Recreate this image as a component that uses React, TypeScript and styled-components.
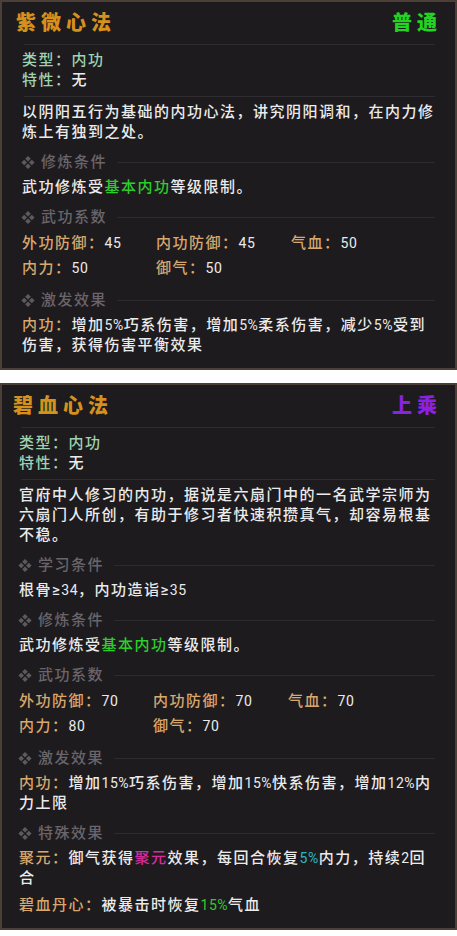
import React from 'react';
import styled, { createGlobalStyle } from 'styled-components';

const GlobalStyle = createGlobalStyle`
	html, body { margin: 0; padding: 0; background: #ffffff; }
`;

const Page = styled.div`
	display: flex;
	flex-direction: column;
	gap: 13px;
	width: 457px;
`;

const Panel = styled.section<{ $inset: number }>`
	box-sizing: border-box;
	width: 100%;
	background: #1e1b1f;
	border: 2px solid #4c3f37;
	padding: 0 18px 13px ${p => p.$inset}px;
	font-family: Roboto, "Noto Sans CJK SC", sans-serif;
	font-size: 15px;
	font-weight: 500;
	line-height: 20px;
	letter-spacing: 1.5px;
	color: #ebebeb;
`;

const Header = styled.div`
	display: flex;
	justify-content: space-between;
	align-items: center;
	padding-top: 9px;
	margin: 0 -5px 11px -6px;
	line-height: 22px;
`;

const Title = styled.span`
	font-family: "Noto Sans CJK SC", serif;
	font-weight: 900;
	font-size: 20px;
	letter-spacing: 5px;
	color: #d6901c;
`;

const Grade = styled.span<{ $color: string }>`
	font-family: "Noto Sans CJK SC", serif;
	font-weight: 900;
	font-size: 20px;
	letter-spacing: 5px;
	color: ${p => p.$color};
`;

const Divider = styled.div`
	height: 1px;
	margin: 0 2px;
	background: rgba(255, 255, 255, 0.08);
`;

const Info = styled.div`
	margin: 5px 0 6px;
`;

const InfoRow = styled.div`
	color: #9fd2b0;
`;

const Plain = styled.span`
	color: #ebebeb;
`;

const Desc = styled.p`
	margin: 5px 0 0;
`;

const Section = styled.div`
	margin-top: 10px;
`;

const Head = styled.div`
	display: flex;
	align-items: center;
	height: 20px;
	color: #69656a;
	gap: 6px;

	svg { flex: none; margin-left: -1px; }

	&::after {
		content: "";
		flex: 1;
		height: 1px;
		margin: 0 2px 0 4px;
		background: rgba(120, 150, 140, 0.14);
	}
`;

const Body = styled.div`
	margin-top: 5px;
`;

const Para = styled.p`
	margin: 0;
	& + & { margin-top: 7px; }
`;

const Label = styled.span`
	color: #d9a86c;
`;

const Hi = styled.span<{ $color: string }>`
	color: ${p => p.$color};
`;

const Num = styled.span`
	font-family: Roboto, "Liberation Sans", sans-serif;
	font-size: 14px;
	font-weight: 400;
	letter-spacing: 0.5px;
`;

const StatGrid = styled.div`
	display: grid;
	grid-template-columns: 134px 135px 1fr;
	grid-auto-rows: 25px;
	align-items: center;
	margin: 3px 0 1px;
`;

const Diamonds = () => (
	<svg width="14" height="13" viewBox="0 0 14 13">
		<g fill="#5e5a5c">
			<path d="M7 0 L9.8 2.8 L7 5.6 L4.2 2.8 Z" />
			<path d="M3.2 3.7 L6 6.5 L3.2 9.3 L0.4 6.5 Z" />
			<path d="M10.8 3.7 L13.6 6.5 L10.8 9.3 L8 6.5 Z" />
			<path d="M7 7.4 L9.8 10.2 L7 13 L4.2 10.2 Z" />
		</g>
	</svg>
);

const SectionHead = ({ text }: { text: string }) => (
	<Head><Diamonds />{text}</Head>
);

const Stat = ({ label, value }: { label: string; value: string }) => (
	<div><Label>{label}：</Label><Num>{value}</Num></div>
);

const GREEN = '#2bcf2b';

const TrainRule = () => (
	<Section>
		<SectionHead text="修炼条件" />
		<Body>武功修炼受<Hi $color={GREEN}>基本内功</Hi>等级限制。</Body>
	</Section>
);

function App() {
	return (
		<Page>
			<GlobalStyle />

			<Panel $inset={20}>
				<Header>
					<Title>紫微心法</Title>
					<Grade $color="#22d322">普通</Grade>
				</Header>
				<Divider />
				<Info>
					<InfoRow>类型：内功</InfoRow>
					<InfoRow>特性：<Plain>无</Plain></InfoRow>
				</Info>
				<Divider />
				<Desc>以阴阳五行为基础的内功心法，讲究阴阳调和，在内力修炼上有独到之处。</Desc>

				<TrainRule />

				<Section>
					<SectionHead text="武功系数" />
					<StatGrid>
						<Stat label="外功防御" value="45" />
						<Stat label="内功防御" value="45" />
						<Stat label="气血" value="50" />
						<Stat label="内力" value="50" />
						<Stat label="御气" value="50" />
					</StatGrid>
				</Section>

				<Section>
					<SectionHead text="激发效果" />
					<Body>
						<Para><Label>内功：</Label>增加<Num>5%</Num>巧系伤害，增加<Num>5%</Num>柔系伤害，减少<Num>5%</Num>受到伤害，获得伤害平衡效果</Para>
					</Body>
				</Section>
			</Panel>

			<Panel $inset={17}>
				<Header>
					<Title>碧血心法</Title>
					<Grade $color="#8a22e6">上乘</Grade>
				</Header>
				<Divider />
				<Info>
					<InfoRow>类型：内功</InfoRow>
					<InfoRow>特性：<Plain>无</Plain></InfoRow>
				</Info>
				<Divider />
				<Desc>官府中人修习的内功，据说是六扇门中的一名武学宗师为六扇门人所创，有助于修习者快速积攒真气，却容易根基不稳。</Desc>

				<Section>
					<SectionHead text="学习条件" />
					<Body>根骨≥<Num>34</Num>，内功造诣≥<Num>35</Num></Body>
				</Section>

				<TrainRule />

				<Section>
					<SectionHead text="武功系数" />
					<StatGrid>
						<Stat label="外功防御" value="70" />
						<Stat label="内功防御" value="70" />
						<Stat label="气血" value="70" />
						<Stat label="内力" value="80" />
						<Stat label="御气" value="70" />
					</StatGrid>
				</Section>

				<Section>
					<SectionHead text="激发效果" />
					<Body>
						<Para><Label>内功：</Label>增加<Num>15%</Num>巧系伤害，增加<Num>15%</Num>快系伤害，增加<Num>12%</Num>内力上限</Para>
					</Body>
				</Section>

				<Section>
					<SectionHead text="特殊效果" />
					<Body>
						<Para><Label>聚元：</Label>御气获得<Hi $color="#d62c9c">聚元</Hi>效果，每回合恢复<Hi $color="#2bb8c2"><Num>5%</Num></Hi>内力，持续<Num>2</Num>回合</Para>
						<Para><Label>碧血丹心：</Label>被暴击时恢复<Hi $color={GREEN}><Num>15%</Num></Hi>气血</Para>
					</Body>
				</Section>
			</Panel>
		</Page>
	);
}

export default App;
